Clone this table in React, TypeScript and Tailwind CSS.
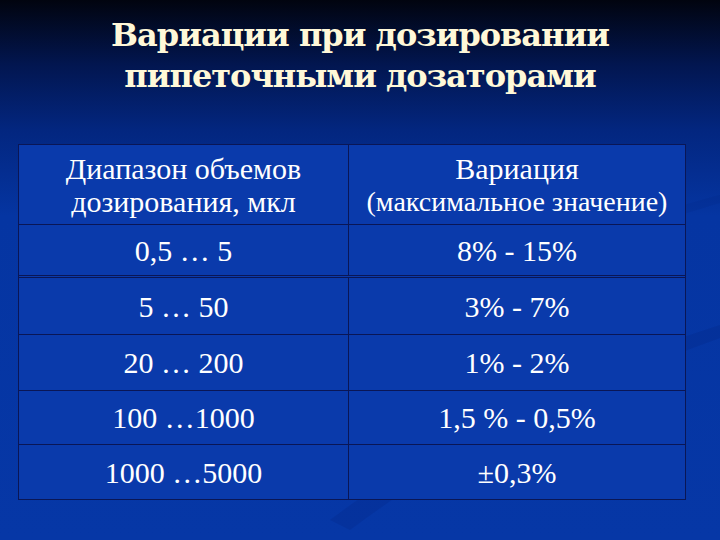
import React from "react";

const rows: [string, string][] = [
  ["5 … 50", "3%  - 7%"],
  ["20 … 200", "1% - 2%"],
  ["100 …1000", "1,5 % - 0,5%"],
  ["1000 …5000", "±0,3%"],
];

const rowHeights = ["h-[56px]", "h-[55px]", "h-[53px]", "h-[54px]"];

const Swoosh = () => (
  <svg
    className="pointer-events-none absolute inset-0"
    width="720"
    height="540"
    viewBox="0 0 720 540"
  >
    <path
      d="M330 520 C 450 430, 580 370, 720 325 L 720 338 C 590 385, 470 440, 350 530 Z"
      fill="#021c6e"
      opacity="0.15"
    />
    <path
      d="M560 250 C 620 225, 680 205, 720 195 L 720 203 C 680 214, 625 234, 570 258 Z"
      fill="#021c6e"
      opacity="0.1"
    />
  </svg>
);

export default function App() {
  return (
    <div className="relative h-[540px] w-[720px] overflow-hidden bg-[linear-gradient(to_bottom,#01040f_0%,#021650_12%,#03267f_24%,#0535a2_40%,#0637a6_100%)]">
      <Swoosh />
      <div className="relative flex flex-col items-center">
        <h1 className="mt-[15px] text-center text-[32px] font-bold leading-[41px] tracking-[-1px] text-[#fff8d8] [font-family:'DejaVu_Serif',serif]">
          Вариации при дозировании
          <br />
          пипеточными дозаторами
        </h1>

        <div className="ml-[18px] mt-[47px] self-start border border-[#0a1656] bg-[#0a3aab] text-white [font-family:'Liberation_Serif',serif]">
          <div className="grid grid-cols-[330px_336px] border-b border-[#0a1656]">
            <div className="flex h-[79px] flex-col items-center justify-center border-r border-[#0a1656] text-[30px] leading-[33px]">
              <span>Диапазон объемов</span>
              <span>дозирования, мкл</span>
            </div>
            <div className="flex h-[79px] flex-col items-center justify-center">
              <span className="text-[30px] leading-[33px]">Вариация</span>
              <span className="text-[28px] leading-[33px]">(максимальное значение)</span>
            </div>
          </div>
          <div className="grid grid-cols-[330px_336px] border-b-[3px] border-double border-[#0a1656]">
            <div className="flex h-[50px] items-center justify-center border-r border-[#0a1656] text-[30px]">
              0,5 … 5
            </div>
            <div className="flex h-[50px] items-center justify-center text-[30px]">
              8%  - 15%
            </div>
          </div>
          {rows.map(([a, b], i) => (
            <div
              key={a}
              className={
                "grid grid-cols-[330px_336px] " +
                (i < rows.length - 1 ? "border-b border-[#0a1656]" : "")
              }
            >
              <div
                className={
                  "flex items-center justify-center border-r border-[#0a1656] text-[30px] " +
                  rowHeights[i]
                }
              >
                {a}
              </div>
              <div className={"flex items-center justify-center text-[30px] " + rowHeights[i]}>
                {b}
              </div>
            </div>
          ))}
        </div>
      </div>
    </div>
  );
}
